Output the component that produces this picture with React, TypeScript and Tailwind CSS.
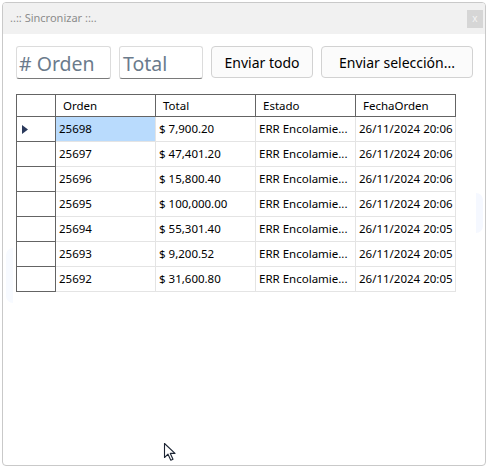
import React from "react";

const rows = [
  { orden: "25698", total: "$ 7,900.20", fecha: "26/11/2024 20:06" },
  { orden: "25697", total: "$ 47,401.20", fecha: "26/11/2024 20:06" },
  { orden: "25696", total: "$ 15,800.40", fecha: "26/11/2024 20:06" },
  { orden: "25695", total: "$ 100,000.00", fecha: "26/11/2024 20:06" },
  { orden: "25694", total: "$ 55,301.40", fecha: "26/11/2024 20:05" },
  { orden: "25693", total: "$ 9,200.52", fecha: "26/11/2024 20:05" },
  { orden: "25692", total: "$ 31,600.80", fecha: "26/11/2024 20:05" },
];

function Cursor() {
  return (
    <svg className="absolute left-[163px] top-[440px]" width="16" height="20" viewBox="0 0 16 20">
      <path
        d="M1.5 1.5 L1.5 15.5 L5 12.2 L7.8 18.3 L10 17.3 L7.3 11.4 L12 11.4 Z"
        fill="white"
        stroke="#1c2433"
        strokeWidth="1.1"
        strokeLinejoin="round"
      />
    </svg>
  );
}

export default function App() {
  return (
    <div className="relative h-[471px] w-[491px] bg-white font-['Noto_Sans',sans-serif] text-black">
      <div className="relative m-[2px] flex h-[464px] w-[484px] flex-col overflow-hidden rounded-[4px] border border-[#c9c9c9] bg-white">
        <div className="absolute left-[3px] top-[245px] h-[55px] w-[7px] rounded-l-full bg-[#f7faff]" />
        <div className="absolute left-[473px] top-[190px] h-[40px] w-[7px] rounded-r-full bg-[#f5f8ff]" />
        <div className="flex h-[31px] shrink-0 items-center justify-between bg-[#f1f1f1] pl-[7px] pr-[2px]">
          <span className="text-[11px] text-[#8c8c8c]">..:: Sincronizar ::..</span>
          <button className="flex h-[18px] w-[16px] items-center justify-center bg-[#d6d6d6] pb-[2px] text-[10px] leading-none text-[#f4f4f4]">
            x
          </button>
        </div>

        <div className="relative flex flex-col pl-[13px] pt-[12px]">
          <div className="flex items-start gap-[8px]">
            <div className="flex h-[33px] w-[95px] items-center rounded-[3px] border border-[#dcdcdc] border-b-[#7a7a7a] pl-[2px] pt-[2px] text-[19.5px] text-[#6b7b8c]">
              # Orden
            </div>
            <div className="flex h-[33px] w-[84px] items-center rounded-[3px] border border-[#dcdcdc] border-b-[#7a7a7a] pl-[3px] pt-[2px] text-[19.5px] text-[#6b7b8c]">
              Total
            </div>
            <button className="flex h-[32px] w-[102px] items-center justify-center rounded-[4px] border border-[#d2d2d2] bg-[#fbfbfb] text-[14px]">
              Enviar todo
            </button>
            <button className="flex h-[32px] w-[152px] items-center justify-center rounded-[4px] border border-[#d2d2d2] bg-[#fbfbfb] text-[14px]">
              Enviar selección...
            </button>
          </div>

          <div className="mt-[15px] grid w-[440px] grid-cols-[40px_100px_100px_100px_100px] text-[11.5px]">
            <div className="h-[23px] border-l border-t border-r border-b border-[#646464]" />
            {["Orden", "Total", "Estado", "FechaOrden"].map((h) => (
              <div
                key={h}
                className="flex h-[23px] items-center border-t border-r border-b border-[#646464] pl-[7px]"
              >
                {h}
              </div>
            ))}
            {rows.map((r, i) => (
              <React.Fragment key={r.orden}>
                <div className="flex h-[25px] items-center border-l border-r border-b border-[#646464] pl-[5px]">
                  {i === 0 && (
                    <svg width="6" height="9" viewBox="0 0 6 9">
                      <path d="M0 0 L6 4.5 L0 9 Z" fill="#2b3a5c" />
                    </svg>
                  )}
                </div>
                <div
                  className={`flex h-[25px] items-center border-r border-b border-[#e4e4e4] pl-[3px] ${
                    i === 0 ? "bg-[#b9dbfd]" : ""
                  }`}
                >
                  {r.orden}
                </div>
                <div className="flex h-[25px] items-center border-r border-b border-[#e4e4e4] pl-[3px]">
                  {r.total}
                </div>
                <div className="flex h-[25px] items-center border-r border-b border-[#e4e4e4] pl-[3px]">
                  ERR Encolamie...
                </div>
                <div className="flex h-[25px] items-center border-r border-b border-[#e4e4e4] pl-[3px]">
                  {r.fecha}
                </div>
              </React.Fragment>
            ))}
          </div>
        </div>
      </div>
      <Cursor />
    </div>
  );
}
